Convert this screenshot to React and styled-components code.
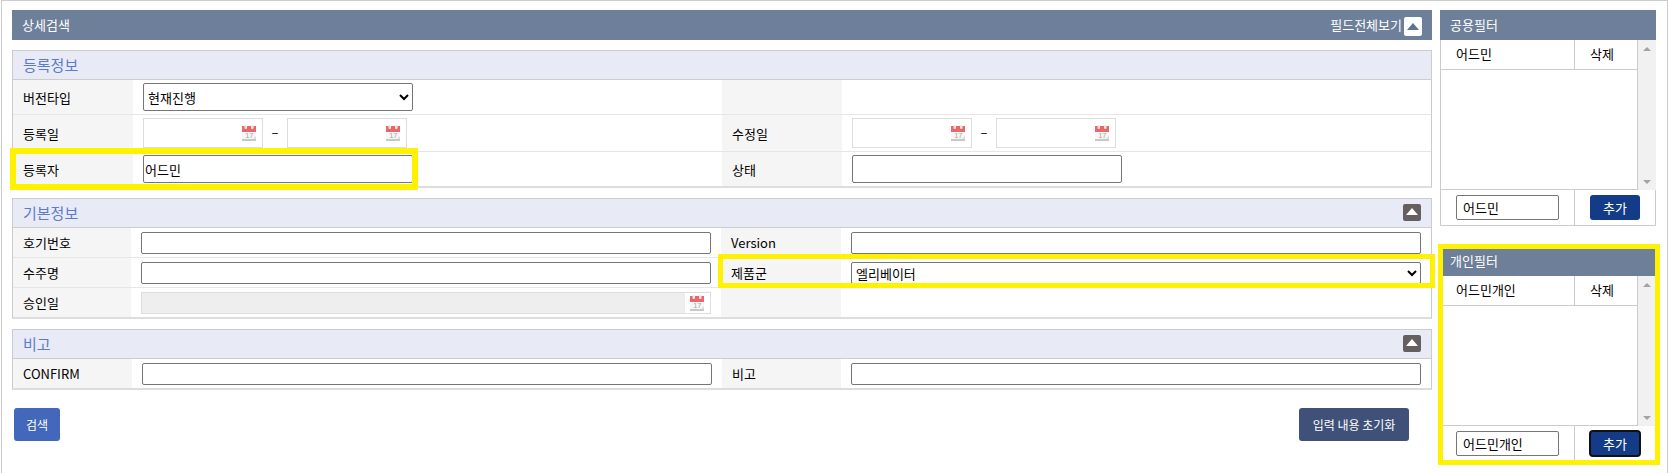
import styled, { createGlobalStyle } from "styled-components";

const GlobalStyle = createGlobalStyle`
  html, body {
    margin: 0;
    padding: 0;
    background: #fff;
    overflow: hidden;
  }
  * {
    box-sizing: border-box;
  }
  body, input, select, button {
    font-family: "Noto Sans CJK KR", "Open Sans", sans-serif;
    color: #000;
  }
`;

const Page = styled.div`
  position: relative;
  width: 1669px;
  height: 473px;
  overflow: hidden;
`;

const Frame = styled.div`
  display: flex;
  gap: 8px;
  width: 1667px;
  height: 473px;
  margin-left: 1px;
  padding: 9px 11px 0 10px;
  border: 1px solid #ccc;
  border-bottom: 0;
`;

const Main = styled.div`
  display: flex;
  flex-direction: column;
  width: 1420px;
`;

const MainHead = styled.div`
  display: flex;
  align-items: center;
  justify-content: space-between;
  height: 30px;
  padding: 0 10px;
  background: #6e7f99;
  color: #fff;
  font-size: 13px;
  line-height: 30px;
`;

const HeadRight = styled.div`
  display: flex;
  align-items: center;
  gap: 2px;
`;

const Toggle = styled.button`
  position: relative;
  display: block;
  width: 18px;
  height: ${(p) => (p.$light ? "19px" : "17px")};
  margin-top: ${(p) => (p.$light ? "3px" : "0")};
  padding: 0;
  border: 0;
  border-radius: 2px;
  background: ${(p) => (p.$light ? "#fff" : "#655f5f")};

  &::before {
    content: "";
    position: absolute;
    left: 3px;
    top: ${(p) => (p.$light ? "6px" : "4px")};
    border-left: 6px solid transparent;
    border-right: 6px solid transparent;
    border-bottom: 7px solid ${(p) => (p.$light ? "#5d7590" : "#fff")};
  }
`;

const Section = styled.section`
  margin-top: 10px;
  border: 1px solid #ccc;
  border-bottom: 2px solid #ddd;
`;

const SectionHead = styled.div`
  display: flex;
  align-items: center;
  justify-content: space-between;
  height: 29px;
  padding: 0 10px 1px 10px;
  border-bottom: 1px solid #ccc;
  background: #e8eaf6;
  color: #5b7cc9;
  font-size: 15px;
`;

const Row = styled.div`
  display: grid;
  grid-template-columns: ${(p) => p.$cols};
  height: ${(p) => p.$h}px;
  border-bottom: 1px solid #e6e6e6;

  &:last-child {
    border-bottom: 0;
  }
`;

const Label = styled.div`
  display: flex;
  align-items: center;
  padding-left: 10px;
  background: #f5f5f5;
  font-size: 13px;
`;

const Field = styled.div`
  display: flex;
  align-items: center;
  padding: 0 10px;
`;

const TextInput = styled.input`
  width: ${(p) => p.$w || "100%"};
  height: ${(p) => p.$h || 22}px;
  padding: 0 1px;
  border: 1px solid #767676;
  border-radius: 2px;
  background: #fff;
  font-size: 13px;
  outline: 0;
`;

const Select = styled.select`
  width: ${(p) => p.$w || "100%"};
  height: ${(p) => p.$h || 22}px;
  border: 1px solid #767676;
  border-radius: 2px;
  background-color: #fff;
  font-size: 13px;
  outline: 0;
`;

const DateBox = styled.div`
  display: flex;
  align-items: center;
  width: ${(p) => p.$w || "120px"};
  height: ${(p) => p.$h || 30}px;
  border: 1px solid #ddd;
  background: #fff;
`;

const DateInput = styled.input`
  flex: 1;
  min-width: 0;
  height: 100%;
  border: 0;
  background: ${(p) => (p.disabled ? "#eee" : "#fff")};
  outline: 0;
`;

const CalendarSlot = styled.span`
  display: flex;
  align-items: center;
  justify-content: center;
  width: 25px;
  height: 100%;
  padding-left: 1px;
  padding-right: 2px;
`;

const Dash = styled.span`
  width: 24px;
  margin-top: -4px;
  text-align: center;
  font-size: 13px;
`;

const Buttons = styled.div`
  display: flex;
  justify-content: space-between;
  margin-top: 18px;
  padding: 0 23px 0 2px;
`;

const ActionButton = styled.button`
  width: ${(p) => p.$w}px;
  height: 33px;
  padding: 0;
  border: 0;
  border-radius: 3px;
  background: ${(p) => p.$bg};
  color: #fff;
  font-size: 12px;
`;

const Side = styled.aside`
  display: flex;
  flex-direction: column;
  gap: 20px;
  width: 216px;
`;

const PanelHead = styled.div`
  height: 30px;
  padding-left: 10px;
  background: #6e7f99;
  color: #fff;
  font-size: 13px;
  line-height: 30px;
`;

const PanelBody = styled.div`
  display: flex;
  height: 150px;
`;

const List = styled.div`
  flex: 1;
  border: 1px solid #ccc;
  border-top: 0;
`;

const ListHead = styled.div`
  display: grid;
  grid-template-columns: 134px 1fr;
  height: 30px;
  border-bottom: 1px solid #ccc;
  font-size: 13px;
  line-height: 28px;
`;

const ListCell = styled.div`
  padding-left: 15px;
  border-right: ${(p) => (p.$divider ? "1px solid #ccc" : "0")};
`;

const Scrollbar = styled.div`
  display: flex;
  flex-direction: column;
  align-items: center;
  justify-content: space-between;
  width: 18px;
  padding: 7px 0 6px;
  background: #f1f1f1;
`;

const Arrow = styled.span`
  border-left: 4px solid transparent;
  border-right: 4px solid transparent;
  border-${(p) => (p.$up ? "bottom" : "top")}: 4px solid #a3a3a3;
`;

const PanelFoot = styled.div`
  display: grid;
  grid-template-columns: 134px 1fr;
  height: 36px;
  border: 1px solid #ccc;
  border-top: 0;
`;

const FootCell = styled.div`
  display: flex;
  align-items: center;
  padding-left: 15px;
  border-right: ${(p) => (p.$divider ? "1px solid #ccc" : "0")};
`;

const FilterInput = styled.input`
  width: 103px;
  height: 25px;
  padding: 0 6px;
  border: 1px solid #767676;
  border-radius: 2px;
  font-size: 13px;
  outline: 0;
`;

const AddButton = styled.button`
  width: 50px;
  height: 25px;
  padding: 0;
  border: 0;
  border-radius: 3px;
  background: #143b88;
  color: #fff;
  font-size: 13px;
  outline: ${(p) => (p.$focused ? "2px solid #111" : "0")};
  outline-offset: -1px;
`;

const Marker = styled.div`
  position: absolute;
  left: ${(p) => p.$x}px;
  top: ${(p) => p.$y}px;
  width: ${(p) => p.$w}px;
  height: ${(p) => p.$h}px;
  border: ${(p) => p.$t || 5}px solid #fff200;
  pointer-events: none;
`;

const CalendarIcon = () => (
  <svg width="14" height="16" viewBox="0 0 14 16">
    <rect x="0" y="1" width="14" height="6" fill="#e8676c" />
    <rect x="0" y="7" width="14" height="7" fill="#f6f6f6" />
    <rect x="0" y="14" width="14" height="2" fill="#c8c8c8" />
    <rect x="2.5" y="0" width="2.5" height="4" rx="1" fill="#eee6e6" />
    <rect x="9" y="0" width="2.5" height="4" rx="1" fill="#eee6e6" />
    <text x="3.2" y="13.2" fontSize="7.5" fill="#aaa" fontFamily="Liberation Sans">
      17
    </text>
    <path d="M11 14l3-3v3z" fill="#dcdcdc" />
  </svg>
);

const DateField = ({ w, h, disabled }) => (
  <DateBox $w={w} $h={h}>
    <DateInput disabled={disabled} />
    <CalendarSlot>
      <CalendarIcon />
    </CalendarSlot>
  </DateBox>
);

const FilterPanel = ({ title, name, focused }) => (
  <div>
    <PanelHead>{title}</PanelHead>
    <PanelBody>
      <List>
        <ListHead>
          <ListCell $divider>{name}</ListCell>
          <ListCell>삭제</ListCell>
        </ListHead>
      </List>
      <Scrollbar>
        <Arrow $up />
        <Arrow />
      </Scrollbar>
    </PanelBody>
    <PanelFoot>
      <FootCell $divider>
        <FilterInput defaultValue={name} />
      </FootCell>
      <FootCell>
        <AddButton $focused={focused}>추가</AddButton>
      </FootCell>
    </PanelFoot>
  </div>
);

const COLS_A = "120px 589px 120px 1fr";
const COLS_B = "118px 590px 120px 1fr";
const COLS_C = "119px 590px 119px 1fr";

const App = () => {
  return (
    <Page>
      <GlobalStyle />
      <Frame>
        <Main>
          <MainHead>
            상세검색
            <HeadRight>
              필드전체보기
              <Toggle $light />
            </HeadRight>
          </MainHead>

          <Section>
            <SectionHead>등록정보</SectionHead>
            <Row $cols={COLS_A} $h={35}>
              <Label>버전타입</Label>
              <Field>
                <Select $w="270px" $h={28} defaultValue="현재진행">
                  <option>현재진행</option>
                </Select>
              </Field>
              <Label />
              <Field />
            </Row>
            <Row $cols={COLS_A} $h={37}>
              <Label>등록일</Label>
              <Field>
                <DateField />
                <Dash>–</Dash>
                <DateField />
              </Field>
              <Label>수정일</Label>
              <Field>
                <DateField />
                <Dash>–</Dash>
                <DateField />
              </Field>
            </Row>
            <Row $cols={COLS_A} $h={34}>
              <Label>등록자</Label>
              <Field>
                <TextInput $w="270px" $h={28} defaultValue="어드민" />
              </Field>
              <Label>상태</Label>
              <Field>
                <TextInput $w="270px" $h={28} />
              </Field>
            </Row>
          </Section>

          <Section>
            <SectionHead>
              기본정보
              <Toggle />
            </SectionHead>
            <Row $cols={COLS_B} $h={30}>
              <Label>호기번호</Label>
              <Field>
                <TextInput />
              </Field>
              <Label>Version</Label>
              <Field>
                <TextInput />
              </Field>
            </Row>
            <Row $cols={COLS_B} $h={30}>
              <Label>수주명</Label>
              <Field>
                <TextInput />
              </Field>
              <Label>제품군</Label>
              <Field>
                <Select defaultValue="엘리베이터">
                  <option>엘리베이터</option>
                </Select>
              </Field>
            </Row>
            <Row $cols={COLS_B} $h={29}>
              <Label>승인일</Label>
              <Field>
                <DateField w="100%" h={22} disabled />
              </Field>
              <Label />
              <Field />
            </Row>
          </Section>

          <Section>
            <SectionHead>
              비고
              <Toggle />
            </SectionHead>
            <Row $cols={COLS_C} $h={29}>
              <Label>CONFIRM</Label>
              <Field>
                <TextInput />
              </Field>
              <Label>비고</Label>
              <Field>
                <TextInput />
              </Field>
            </Row>
          </Section>

          <Buttons>
            <ActionButton $w={46} $bg="#4267bb">
              검색
            </ActionButton>
            <ActionButton $w={110} $bg="#3f5079">
              입력 내용 초기화
            </ActionButton>
          </Buttons>
        </Main>

        <Side>
          <FilterPanel title="공용필터" name="어드민" />
          <FilterPanel title="개인필터" name="어드민개인" focused />
        </Side>
      </Frame>

      <Marker $x={10} $y={148} $w={408} $h={42} $t={6} />
      <Marker $x={718} $y={254} $w={717} $h={34} />
      <Marker $x={1438} $y={244} $w={222} $h={221} />
    </Page>
  );
};

export default App;
